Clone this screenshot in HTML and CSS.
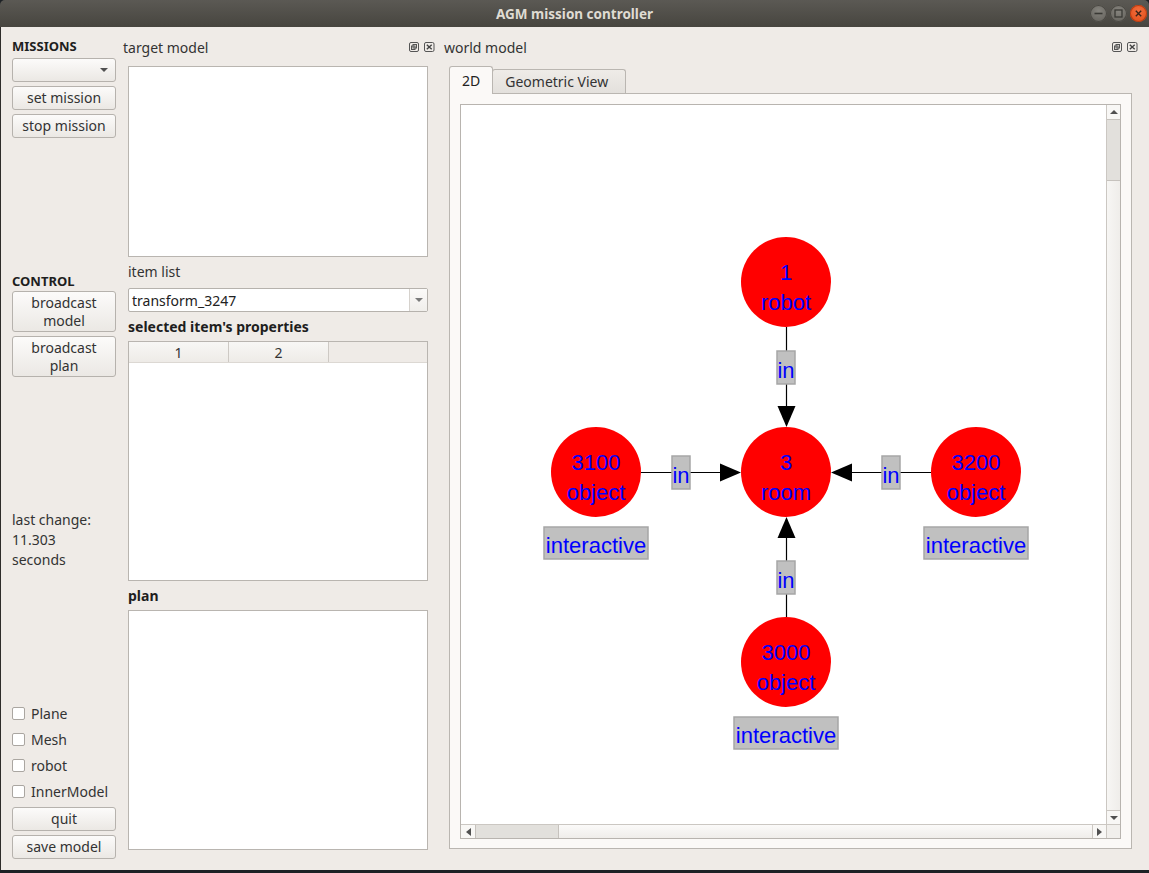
FILE: index.html
```html
<!DOCTYPE html>
<html>
<head>
<meta charset="utf-8">
<title>AGM mission controller</title>
<link rel="stylesheet" href="styles.css">
</head>
<body>
<div class="window">
  <div class="titlebar">
    <span class="title">AGM mission controller</span>
    <div class="wbtns">
      <span class="wbtn"><svg width="17" height="17" viewBox="0 0 17 17"><line x1="4.5" y1="8.5" x2="12.5" y2="8.5" stroke="#3a3935" stroke-width="1.6"/></svg></span>
      <span class="wbtn"><svg width="17" height="17" viewBox="0 0 17 17"><rect x="5" y="5" width="7" height="7" fill="none" stroke="#3a3935" stroke-width="1.3"/></svg></span>
      <span class="wbtn close"><svg width="17" height="17" viewBox="0 0 17 17"><path d="M5.8 5.8 L11.2 11.2 M11.2 5.8 L5.8 11.2" stroke="#3a2418" stroke-width="1.4"/></svg></span>
    </div>
  </div>
  <div class="body">
    <div class="side">
      <div class="grp">MISSIONS</div>
      <div class="combo"><span class="caret down"></span></div>
      <div class="btn">set mission</div>
      <div class="btn">stop mission</div>
      <div class="grp control">CONTROL</div>
      <div class="btn tall">broadcast<br>model</div>
      <div class="btn tall">broadcast<br>plan</div>
      <div class="info">last change:<br>11.303<br>seconds</div>
      <div class="checks">
        <div class="check"><span class="box"></span>Plane</div>
        <div class="check"><span class="box"></span>Mesh</div>
        <div class="check"><span class="box"></span>robot</div>
        <div class="check"><span class="box"></span>InnerModel</div>
      </div>
      <div class="btn quit">quit</div>
      <div class="btn">save model</div>
    </div>

    <div class="mid">
      <div class="dockhead">
        <span>target model</span>
        <svg class="dockicons" width="26" height="10" viewBox="0 0 26 10">
          <rect x="0.5" y="0.5" width="9" height="9" rx="1.5" fill="none" stroke="#555" stroke-width="1"/>
          <rect x="4" y="2.5" width="3.5" height="3.5" fill="none" stroke="#555" stroke-width="1"/>
          <rect x="2.5" y="4" width="3.5" height="3.5" fill="none" stroke="#555" stroke-width="1"/>
          <rect x="15.5" y="0.5" width="9.5" height="9" rx="1.5" fill="none" stroke="#555" stroke-width="1"/>
          <path d="M17.8 2.8 L22.7 7.2 M22.7 2.8 L17.8 7.2" stroke="#444" stroke-width="1.4"/>
        </svg>
      </div>
      <div class="textbox target"></div>
      <div class="lbl">item list</div>
      <div class="combo2"><span class="ctext">transform_3247</span><span class="drop"><span class="caret down gray"></span></span></div>
      <div class="lbl bold">selected item's properties</div>
      <div class="table">
        <div class="thead"><div class="th">1</div><div class="th">2</div></div>
        <div class="tbody"></div>
      </div>
      <div class="lbl bold">plan</div>
      <div class="textbox plan"></div>
    </div>

    <div class="world">
      <div class="dockhead">
        <span>world model</span>
        <svg class="dockicons" width="26" height="10" viewBox="0 0 26 10">
          <rect x="0.5" y="0.5" width="9" height="9" rx="1.5" fill="none" stroke="#555" stroke-width="1"/>
          <rect x="4" y="2.5" width="3.5" height="3.5" fill="none" stroke="#555" stroke-width="1"/>
          <rect x="2.5" y="4" width="3.5" height="3.5" fill="none" stroke="#555" stroke-width="1"/>
          <rect x="15.5" y="0.5" width="9.5" height="9" rx="1.5" fill="none" stroke="#555" stroke-width="1"/>
          <path d="M17.8 2.8 L22.7 7.2 M22.7 2.8 L17.8 7.2" stroke="#444" stroke-width="1.4"/>
        </svg>
      </div>
      <div class="tabs">
        <div class="tab active">2D</div>
        <div class="tab geo">Geometric View</div>
      </div>
      <div class="pane">
        <div class="view">
          <div class="canvas">
            <svg class="graph" width="645" height="719" viewBox="461 105 645 719">
              <g stroke="#000" stroke-width="1.2">
                <line x1="786.5" y1="327" x2="786.5" y2="408"/>
                <line x1="641" y1="472.5" x2="721" y2="472.5"/>
                <line x1="931" y1="472.5" x2="851" y2="472.5"/>
                <line x1="786.5" y1="617" x2="786.5" y2="536"/>
              </g>
              <g fill="#000">
                <polygon points="786.5,427 777.5,406 795.5,406"/>
                <polygon points="741,472.5 720,463.5 720,481.5"/>
                <polygon points="831,472.5 852,463.5 852,481.5"/>
                <polygon points="786.5,517 777.5,538 795.5,538"/>
              </g>
              <g fill="#ff0000">
                <circle cx="786" cy="282" r="45"/>
                <circle cx="786" cy="472" r="45"/>
                <circle cx="596" cy="472" r="45"/>
                <circle cx="976" cy="472" r="45"/>
                <circle cx="786" cy="662" r="45"/>
              </g>
              <g fill="#c0c0c0" stroke="#a6a6a6" stroke-width="1.5">
                <rect x="777" y="351" width="18" height="33"/>
                <rect x="672" y="456" width="18" height="33"/>
                <rect x="882" y="456" width="18" height="33"/>
                <rect x="777" y="561" width="18" height="33"/>
                <rect x="544" y="527" width="104" height="32"/>
                <rect x="924" y="527" width="104" height="32"/>
                <rect x="734" y="717" width="104" height="32"/>
              </g>
              <g class="gtext" fill="#0000ff" text-anchor="middle">
                <text x="786" y="280">1</text>
                <text x="786" y="310">robot</text>
                <text x="786" y="470">3</text>
                <text x="786" y="500">room</text>
                <text x="596" y="470">3100</text>
                <text x="596" y="500">object</text>
                <text x="976" y="470">3200</text>
                <text x="976" y="500">object</text>
                <text x="786" y="660">3000</text>
                <text x="786" y="690">object</text>
                <text x="786" y="378">in</text>
                <text x="681" y="483">in</text>
                <text x="891" y="483">in</text>
                <text x="786" y="588">in</text>
                <text x="596" y="553">interactive</text>
                <text x="976" y="553">interactive</text>
                <text x="786" y="743">interactive</text>
              </g>
            </svg>
          </div>
          <div class="vscroll">
            <div class="sarrow"><span class="caret up"></span></div>
            <div class="vhandle"></div>
            <div class="strack"></div>
            <div class="sarrow"><span class="caret down"></span></div>
          </div>
          <div class="hscroll">
            <div class="sarrow"><span class="caret left"></span></div>
            <div class="hhandle"></div>
            <div class="strack"></div>
            <div class="sarrow"><span class="caret right"></span></div>
          </div>
          <div class="corner"></div>
        </div>
      </div>
    </div>
  </div>
  <div class="desk"></div>
</div>
</body>
</html>
```

FILE: styles.css
```css
* { box-sizing: border-box; }
html, body { margin: 0; padding: 0; }
body {
  width: 1149px;
  height: 873px;
  overflow: hidden;
  background: #1d2125;
  font-family: "Noto Sans", "Open Sans", sans-serif;
  font-size: 14px;
  color: #363636;
}
.window { width: 1149px; height: 873px; display: flex; flex-direction: column; }

.titlebar {
  height: 27px;
  flex: none;
  display: grid;
  grid-template-columns: 1fr auto 1fr;
  align-items: center;
  background: linear-gradient(#5b5954, #47453f);
  border-radius: 5px 5px 0 0;
}
.title { grid-column: 2; font-weight: bold; font-size: 13.5px; color: #dfdbd2; }
.wbtns { grid-column: 3; justify-self: end; display: flex; gap: 3px; margin-right: 2px; }
.wbtn {
  width: 17px; height: 17px; border-radius: 50%;
  background: radial-gradient(circle at 50% 35%, #86847e, #5f5d57);
  box-shadow: inset 0 0 0 1px #4a4843;
  display: flex;
}
.wbtn.close { background: radial-gradient(circle at 50% 35%, #f26d3d, #df4b16); box-shadow: inset 0 0 0 1px #b83c12; }

.body { flex: 1; display: flex; background: #efebe7; box-shadow: inset 1px 0 #2e2c2a; }
.desk { height: 3px; flex: none; background: #1d2125; }

/* left column */
.side { width: 104px; margin-left: 12px; padding-top: 11px; display: flex; flex-direction: column; gap: 4px; }
.grp { font-weight: bold; font-size: 13px; line-height: 16px; color: #1e1e1e; }
.grp.control { margin-top: 131px; margin-bottom: -2px; }
.btn {
  height: 24px;
  border: 1px solid #b6b2ad;
  border-radius: 3px;
  background: linear-gradient(#fcfbfa, #ebe8e4);
  display: flex; align-items: center; justify-content: center;
  text-align: center; line-height: 17.5px; color: #333;
}
.btn.tall { height: 41px; }
.combo {
  height: 24px;
  border: 1px solid #b6b2ad;
  border-radius: 3px;
  background: linear-gradient(#fcfbfa, #ebe8e4);
  display: flex; align-items: center; justify-content: flex-end;
  padding-right: 7px;
}
.caret { width: 0; height: 0; border: 4px solid transparent; display: block; }
.caret.down { border-top: 4px solid #505050; border-bottom: 0; }
.caret.up { border-bottom: 4px solid #505050; border-top: 0; }
.caret.left { border-right: 5px solid #505050; border-left: 0; }
.caret.right { border-left: 5px solid #505050; border-right: 0; }
.caret.gray { border-top-color: #7a7a7a; }
.info { margin-top: 129px; line-height: 20px; color: #333; }
.checks { margin-top: 126px; display: flex; flex-direction: column; }
.check { height: 26px; display: flex; align-items: center; gap: 6px; color: #333; }
.box { width: 13px; height: 13px; border: 1px solid #aaa6a1; border-radius: 2px; background: #fff; flex: none; }
.btn.quit { margin-top: -1px; }

/* middle column */
.mid { width: 312px; margin-left: 7px; padding-top: 11px; display: flex; flex-direction: column; }
.mid > *:not(.dockhead) { margin-left: 5px; width: 300px; }
.dockhead { height: 18px; display: flex; align-items: center; justify-content: space-between; color: #333; }
.dockicons { display: block; }
.textbox { background: #fff; border: 1px solid #b9b5b0; }
.textbox.target { margin-top: 10px; height: 191px; }
.textbox.plan { margin-top: 5px; height: 240px; }
.lbl { line-height: 18px; margin-top: 6px; color: #333; }
.lbl.bold { font-weight: bold; color: #1e1e1e; }
.combo2 {
  margin-top: 7px; height: 24px;
  border: 1px solid #b6b2ad; border-radius: 2px; background: #fff;
  display: flex; align-items: center;
}
.ctext { flex: 1; padding-left: 3px; color: #222; }
.drop { width: 18px; height: 100%; border-left: 1px solid #d6d2cd; display: flex; align-items: center; justify-content: center; background: linear-gradient(#fbfaf9, #f0eeeb); }
.table { margin-top: 5px; height: 240px; border: 1px solid #b9b5b0; background: #fff; display: flex; flex-direction: column; }
.thead { height: 21px; display: flex; background: #efebe7; border-bottom: 1px solid #dcd8d3; }
.th {
  width: 100px; display: flex; align-items: center; justify-content: center;
  background: linear-gradient(#f8f7f5, #eeebe7);
  border-right: 1px solid #cdc9c4; color: #333; font-size: 14px;
}
.tbody { flex: 1; }

/* world column */
.world { width: 694px; margin-left: 9px; padding-top: 11px; display: flex; flex-direction: column; }
.tabs { margin-top: 10px; margin-left: 5px; height: 27px; display: flex; align-items: flex-end; }
.tab {
  height: 24px; padding: 0 12px;
  border: 1px solid #bab6b1; border-bottom: none;
  border-radius: 3px 3px 0 0;
  background: linear-gradient(#efece8, #e3e0dc);
  display: flex; align-items: center; color: #333;
}
.tab.geo { padding-right: 17px; margin-left: -1px; }
.tab.active { height: 28px; margin-bottom: -1px; background: #fbf9f7; position: relative; z-index: 1; color: #222; }
.pane {
  margin-left: 5px; width: 683px; height: 756px;
  border: 1px solid #bab6b1; background: #fbf9f7;
  padding: 10px 10px 9px 10px;
}
.view {
  height: 100%;
  border: 1px solid #b8b4af; background: #fff;
  display: grid; grid-template-columns: 1fr 14px; grid-template-rows: 1fr 14px;
}
.canvas { overflow: hidden; }
.graph { display: block; }
.gtext { font-family: "Liberation Sans", Arial, sans-serif; font-size: 22px; }
.vscroll { display: flex; flex-direction: column; border-left: 1px solid #cbc7c2; background: linear-gradient(90deg, #f7f6f4, #efedea); }
.hscroll { display: flex; border-top: 1px solid #cbc7c2; background: linear-gradient(#fbfaf9, #efedea); }
.sarrow { width: 13px; height: 13px; flex: none; display: flex; align-items: center; justify-content: center; background: #f8f7f5; }
.hscroll .sarrow { width: 14px; }
.vscroll .sarrow { height: 14px; }
.vhandle { height: 62px; background: #e2e0dc; border-top: 1px solid #c6c2bd; border-bottom: 1px solid #c6c2bd; }
.hhandle { width: 84px; background: #e2e0dc; border-left: 1px solid #c6c2bd; border-right: 1px solid #c6c2bd; }
.vscroll .sarrow:last-child { border-top: 1px solid #cbc7c2; }
.hscroll .sarrow:last-child { border-left: 1px solid #cbc7c2; }
.strack { flex: 1; }
.corner { background: #f1efec; border-top: 1px solid #cbc7c2; border-left: 1px solid #cbc7c2; }
```
